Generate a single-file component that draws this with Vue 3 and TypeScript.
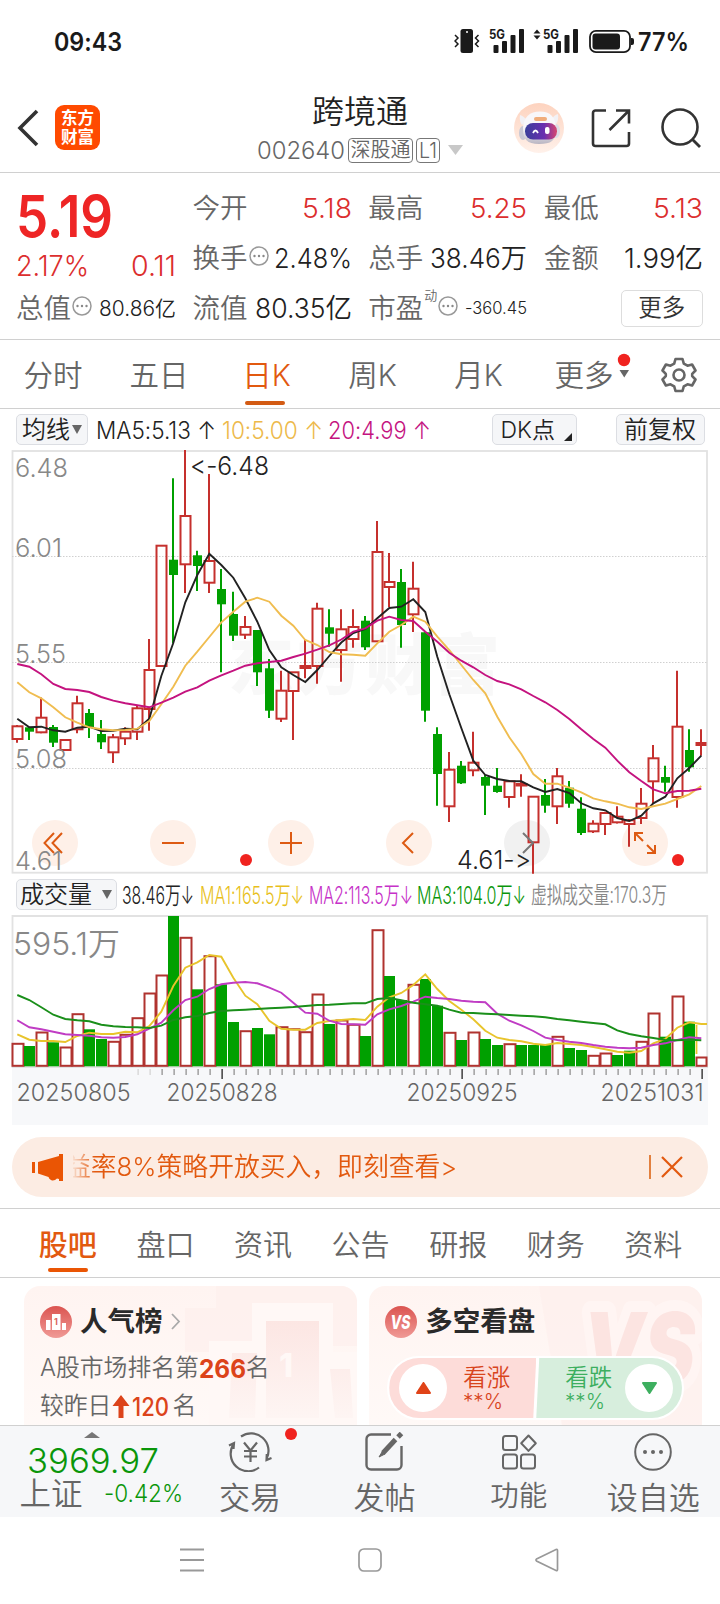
<script setup lang="ts">
import { defineComponent, h } from 'vue'

/* Single-line label whose glyphs are fitted to a fixed width. */
const FitText = defineComponent({
  props: {
    text: { type: String, required: true },
    w: { type: Number, required: true },
    size: { type: Number, required: true },
    weight: { type: Number, default: 350 },
  },
  setup(props) {
    return () =>
      h('svg', { class: 'fit', width: props.w, height: props.size }, [
        h(
          'text',
          {
            x: 0,
            y: props.size * 0.864,
            'font-size': props.size,
            'font-weight': props.weight,
            fill: 'currentColor',
            textLength: props.w,
            lengthAdjust: 'spacingAndGlyphs',
          },
          props.text,
        ),
      ])
  },
})

type Candle = [up: 0 | 1, high: number, top: number, bottom: number, low: number]

const STEP = 12
const cx = (i: number): number => 17 + i * STEP + 0.3

const candles: Candle[] = [
  [1, 725, 726.3, 739, 742.7], [0, 726.7, 727.3, 731.7, 740], [1, 697.5, 717.7, 732.3, 733.3],
  [0, 725, 727, 742.7, 747], [1, 740, 740, 750, 750], [1, 695.7, 703.3, 729.3, 733.3],
  [0, 709, 713, 727.3, 738], [0, 720, 734, 742.3, 749], [1, 734, 737.3, 752.3, 763],
  [1, 727.3, 731.7, 738.3, 745], [1, 705, 708.3, 731.7, 740], [1, 639, 670, 709, 730.7],
  [1, 545.7, 545.7, 666, 666], [0, 478.3, 559.7, 575, 643], [1, 450, 516, 564.3, 593],
  [0, 550.7, 555.3, 566, 591], [1, 474, 561, 582.7, 593], [0, 569, 589, 604.3, 672.3],
  [0, 591.7, 614, 635.7, 641], [1, 616, 627, 634.7, 639], [0, 630, 630, 672.3, 686],
  [0, 659, 668.3, 710.7, 718], [1, 670.7, 690.7, 718.7, 722], [1, 672.3, 672.3, 691, 740],
  [1, 639, 666, 668, 678.3], [1, 602.7, 608.7, 666, 683.7], [0, 609.3, 627.3, 633.7, 646.7],
  [1, 609.3, 629.3, 650, 681.7], [1, 609.3, 627, 639, 647.7], [0, 616, 620.7, 647.3, 650],
  [1, 521, 552, 641.3, 641.3], [1, 553, 582, 587, 607], [0, 569, 582, 625, 647.7],
  [1, 561.7, 588.7, 614.3, 632], [0, 632.3, 632.3, 710.7, 721.7], [0, 727.3, 734, 774, 805.7],
  [1, 752, 769.7, 806.3, 822], [0, 761, 765.7, 783.3, 784], [1, 731.7, 762.7, 770.3, 776.3],
  [0, 775, 777, 785.7, 815], [0, 768, 785.7, 792, 792.7], [1, 780, 781.3, 797, 807.7],
  [1, 774.3, 784, 785.5, 796.7], [1, 796.7, 796.7, 842.3, 873.7], [0, 779, 795, 805.7, 812.7],
  [1, 768, 776.3, 806.3, 824], [0, 781, 787.7, 803.7, 807.7], [0, 797.3, 808.7, 833, 835],
  [1, 820.3, 823.7, 831.3, 833], [1, 811.7, 813, 824, 835], [1, 806.3, 816.7, 822.3, 823.5],
  [1, 819, 820.3, 824, 846.7], [1, 788, 803.7, 818, 824], [1, 745, 758.3, 781.3, 803.3],
  [0, 765.7, 777, 782.7, 791.7], [1, 670.7, 726.7, 797, 807.7], [0, 729.3, 750, 767.3, 771.7],
  [1, 729.3, 743, 745, 755.7],
]

const ma5 = [718.7, 727.3, 726.7, 730.3, 731.7, 727.7, 726.7, 731, 730.7, 728.7, 729.3, 718.7, 676, 643, 602.3, 575, 553.7, 565, 577.7, 598.3, 621.7, 650, 667.3, 675, 682, 670, 656, 642.5, 633, 629, 618.3, 608, 606.7, 599.3, 612, 656.7, 694.3, 728, 760.7, 775, 779, 781, 781.3, 787.3, 792, 789, 793, 803.3, 808.3, 810.3, 818, 821, 815.7, 803.3, 796.7, 778.3, 768, 755.7]
const ma10 = [682.3, 692.3, 698.3, 707.3, 717.3, 722.7, 727.3, 729.3, 730.3, 730, 728.7, 721, 704.3, 686.7, 665.7, 651.7, 637, 622.3, 611.7, 601.7, 597.7, 601.7, 615.7, 625.7, 640, 645, 652, 654.3, 654.7, 655.7, 643.3, 631.7, 625, 616.7, 621.7, 636.7, 650, 665, 680, 693.3, 716.7, 737.3, 754, 774, 783.7, 783.7, 787.7, 792.3, 798.3, 801.3, 803.7, 807.3, 809, 806.3, 803.7, 799, 794.3, 786]
const ma20 = [664, 666.7, 674.3, 684, 689, 690, 692, 697, 700.7, 703.3, 705.3, 707.3, 702.7, 697.7, 691.7, 687.3, 680.7, 675.3, 670.7, 665.7, 663.3, 662, 660.7, 657, 653.7, 649.7, 645.3, 639.5, 631.7, 628.3, 620.7, 616.7, 620, 621, 631.7, 641.7, 652.7, 660.7, 667.3, 675, 681, 684.3, 689.3, 696, 702.3, 710, 719, 729.3, 739, 747.7, 760.7, 772.3, 781, 789.3, 793.3, 791, 790.7, 788.7]

const volTops = [1043.3, 1046, 1032, 1042.3, 1047, 1013.7, 1029.3, 1039, 1041.3, 1034.3, 1017.7, 993, 975, 916, 937.3, 989.3, 955.7, 984.3, 1022, 1030.7, 1028, 1034.3, 1026.7, 1028.7, 1031.7, 994, 1024, 1020, 1024.3, 1036, 929.7, 976, 1000, 984.3, 979, 1005.7, 1032.3, 1040, 1032, 1039, 1045, 1043.7, 1045, 1045, 1044, 1036.3, 1048, 1050, 1055.3, 1053, 1055, 1050.7, 1041.3, 1013, 1036.7, 996, 1021.7, 1057]
/* Days whose volume is drawn as a solid green bar. */
const volGreen = new Set([1, 3, 6, 7, 13, 15, 17, 18, 20, 21, 26, 29, 31, 32, 34, 35, 37, 39, 40, 42, 43, 44, 46, 47, 50, 51, 54, 56])
const v1 = [1034.3, 1039.7, 1041, 1041, 1042, 1036, 1032.7, 1034, 1034, 1031.7, 1032.3, 1026, 1011.7, 986, 967.7, 962.3, 955, 956.7, 977.7, 995.7, 1004.3, 1020.7, 1028.7, 1029.7, 1029.7, 1023, 1021, 1020, 1019, 1020, 1006.7, 997.3, 993, 985, 974.3, 989, 1001, 1009.7, 1019.3, 1030.7, 1037.7, 1040, 1041.3, 1043.7, 1045, 1043, 1044, 1045, 1047, 1049.3, 1051.7, 1052.7, 1051, 1043.3, 1039, 1027.7, 1022.3, 1024]
const v2 = [1020.3, 1027.3, 1029.3, 1031.7, 1034.3, 1035, 1035.7, 1037.3, 1037.7, 1037, 1034.3, 1028.7, 1022.7, 1010.3, 1000, 996.7, 989, 984.3, 982.7, 982, 983.3, 987.7, 992.7, 1002.7, 1012.7, 1013.7, 1020.7, 1024, 1024.3, 1024.7, 1014.3, 1009.3, 1006, 1001.7, 996.7, 998, 999, 1000.7, 1001.7, 1002.3, 1013.7, 1020.7, 1025.3, 1031, 1037.7, 1040, 1041.7, 1043, 1045, 1046.7, 1047.7, 1048.3, 1047.7, 1045, 1043.3, 1040, 1037.3, 1038.3]
const v3 = [995, 1000, 1007.3, 1014.7, 1019, 1020.3, 1021.3, 1024.7, 1026.3, 1027, 1027.3, 1028, 1025.7, 1020, 1017.3, 1016, 1013, 1011, 1010.3, 1009.7, 1009, 1008.3, 1007.7, 1007, 1006, 1005, 1004.7, 1004, 1003.3, 1003.3, 999, 998, 1000.3, 1002.7, 1004.3, 1005.7, 1009.7, 1012.7, 1013, 1013.7, 1014.3, 1015, 1015.7, 1016.3, 1017.3, 1019, 1020.3, 1021.7, 1023, 1024.3, 1030.3, 1034, 1036.3, 1038, 1040, 1040.3, 1039.7, 1040.3]

const line = (ys: number[]): string => ys.map((y, i) => `${cx(i)},${y}`).join(' ')

const ticks = Array.from({ length: 48 }, (_, k) => k + 10)
const majors = new Set([17, 37, 57])

const periods = ['分时', '五日', '日K', '周K', '月K']
const sections = ['股吧', '盘口', '资讯', '公告', '研报', '财务', '资料']
const priceLabels = [
  { t: '6.48', y: 477.3, w: 53 },
  { t: '6.01', y: 557.3, w: 47 },
  { t: '5.55', y: 662.7, w: 51 },
  { t: '5.08', y: 768, w: 52 },
  { t: '4.61', y: 870, w: 47 },
]
</script>

<template>
  <div class="screen">
    <div class="status">
      <FitText text="09:43" :w="68" :size="25" :weight="600" />
      <div class="status-right">
        <svg width="180" height="26" viewBox="454 28 180 26">
          <g fill="#1a1a1a">
            <rect x="460.5" y="29" width="12.5" height="24" rx="2.5" />
            <circle cx="467" cy="32" r="1" fill="#fff" />
            <g fill="none" stroke="#1a1a1a" stroke-width="1.5">
              <path d="M455 35l3 3-3 3 3 3-3 3M478.500 35l-3 3 3 3-3 3 3 3" />
            </g>
            <g v-for="dx in [0, 54]" :key="dx" :transform="`translate(${dx} 0)`">
              <rect x="493.500" y="45" width="5" height="8" rx="1" />
              <rect x="502" y="41" width="5" height="12" rx="1" />
              <rect x="510.500" y="35" width="5" height="18" rx="1" />
              <rect x="519" y="29" width="5" height="24" rx="1" />
              <text x="489" y="39" font-size="13" font-weight="700" textLength="16" lengthAdjust="spacingAndGlyphs">5G</text>
            </g>
            <path d="M533.500 33.500l3.500-4 3.500 4zM533.500 35.500l3.500 4 3.500-4z" />
            <rect x="590" y="30.800" width="40" height="21.400" rx="6" fill="none" stroke="#1a1a1a" stroke-width="1.800" />
            <rect x="592.500" y="33.500" width="27.500" height="16" rx="3" />
            <path d="M631 38h1a2 2 0 0 1 2 2v3a2 2 0 0 1-2 2h-1z" />
          </g>
        </svg>
        <FitText text="77%" :w="51" :size="25" :weight="600" />
      </div>
    </div>

    <header class="header">
      <div class="header-left">
        <svg width="24" height="40" viewBox="0 0 24 40"><path d="M21 3L4 20l17 17" fill="none" stroke="#333" stroke-width="3.600" /></svg>
        <div class="logo"><span>东方</span><span>财富</span></div>
      </div>
      <div class="header-mid">
        <div class="title">跨境通</div>
        <div class="sub">
          <FitText text="002640" :w="88" :size="24" />
          <span class="badge">深股通</span>
          <span class="badge l1"><FitText text="L1" :w="18" :size="21" /></span>
          <svg class="sub-arrow" width="15" height="10"><path d="M0 0h15l-7.500 10z" fill="#c8c8c8" /></svg>
        </div>
      </div>
      <div class="header-right">
        <svg width="50" height="50" viewBox="0 0 50 50">
          <defs>
            <linearGradient id="halo" x1="0" y1="0" x2="0" y2="1"><stop offset="0" stop-color="#fdd3bf" /><stop offset="1" stop-color="#fff1ea" /></linearGradient>
            <linearGradient id="visor"><stop offset="0" stop-color="#3a3f9a" /><stop offset=".6" stop-color="#6a2fb0" /><stop offset="1" stop-color="#d8476e" /></linearGradient>
            <linearGradient id="helmet" x1="0" y1="0" x2="0" y2="1"><stop offset=".5" stop-color="#f8f7fa" /><stop offset="1" stop-color="#b9b5c2" /></linearGradient>
          </defs>
          <circle cx="25" cy="25" r="25" fill="url(#halo)" />
          <path d="M6 12q4 1 7 6l-5 4q-3-4-2-10zM44 11q-4 1-7 6l5 4q3-4 2-10z" fill="#f2f1f5" />
          <ellipse cx="9" cy="30" rx="4" ry="7" fill="#c9c8d4" />
          <ellipse cx="42" cy="28" rx="4" ry="7" fill="#dddce5" />
          <path d="M9 26C9 14 16 8.500 26 8.500s16 5.500 16 17.500-5 15-17 15S9 36 9 26z" fill="url(#helmet)" />
          <rect x="20" y="14" width="13" height="4" rx="2" fill="#f0ad7c" />
          <rect x="11" y="20" width="32" height="16.500" rx="8" fill="url(#visor)" />
          <path d="M19 30q2.500-5 5 0" fill="none" stroke="#fff" stroke-width="1.800" />
          <rect x="31" y="24" width="4.500" height="7" rx="2" fill="#fff" />
        </svg>
        <svg width="40" height="40" viewBox="0 0 40 40"><path d="M15 2.500H4.500a2.500 2.500 0 0 0-2.500 2.500v30.500a2.500 2.500 0 0 0 2.500 2.500H35.500a2.500 2.500 0 0 0 2.500-2.500V24M25 2.500H38V15.500M38 2.500L18.500 22" fill="none" stroke="#333" stroke-width="2.600" /></svg>
        <svg width="42" height="42" viewBox="0 0 42 42"><circle cx="19" cy="20" r="17.500" fill="none" stroke="#333" stroke-width="2.600" /><path d="M31 32l8 8" stroke="#333" stroke-width="2.800" /></svg>
      </div>
    </header>

    <section class="quote">
      <div class="q-price">
        <div class="q-big"><FitText text="5.19" :w="97" :size="58" :weight="600" /></div>
        <div class="q-change">
          <FitText text="2.17%" :w="73" :size="28" />
          <FitText text="0.11" :w="45" :size="28" />
        </div>
      </div>
      <div class="cell"><span>今开</span><FitText class="red" text="5.18" :w="50" :size="27.500" /></div>
      <div class="cell"><span>最高</span><FitText class="red" text="5.25" :w="57" :size="27.500" /></div>
      <div class="cell"><span>最低</span><FitText class="red" text="5.13" :w="50" :size="27.500" /></div>
      <div class="cell">
        <span>换手</span>
        <svg class="more-i" width="20" height="20"><circle cx="10" cy="10" r="9" fill="none" stroke="#999" stroke-width="1.500" /><g fill="#888"><circle cx="5.500" cy="10" r="1.200" /><circle cx="10" cy="10" r="1.200" /><circle cx="14.500" cy="10" r="1.200" /></g></svg>
        <FitText class="dark" text="2.48%" :w="78" :size="27.500" />
      </div>
      <div class="cell"><span>总手</span><FitText class="dark" text="38.46万" :w="97" :size="27.500" /></div>
      <div class="cell"><span>金额</span><FitText class="dark" text="1.99亿" :w="79" :size="27.500" /></div>
      <div class="cell">
        <span>总值</span>
        <svg class="more-i" width="20" height="20"><circle cx="10" cy="10" r="9" fill="none" stroke="#999" stroke-width="1.500" /><g fill="#888"><circle cx="5.500" cy="10" r="1.200" /><circle cx="10" cy="10" r="1.200" /><circle cx="14.500" cy="10" r="1.200" /></g></svg>
        <FitText class="dark" text="80.86亿" :w="77" :size="21" />
      </div>
      <div class="cell"><span>流值</span><FitText class="dark" text="80.35亿" :w="97" :size="27.500" /></div>
      <div class="cell">
        <span>市盈</span><sup>动</sup>
        <svg class="more-i" width="20" height="20"><circle cx="10" cy="10" r="9" fill="none" stroke="#999" stroke-width="1.500" /><g fill="#888"><circle cx="5.500" cy="10" r="1.200" /><circle cx="10" cy="10" r="1.200" /><circle cx="14.500" cy="10" r="1.200" /></g></svg>
        <FitText class="dark" text="-360.45" :w="62" :size="17.500" />
      </div>
      <div class="cell end"><button class="more-btn">更多</button></div>
    </section>

    <nav class="periods">
      <div v-for="(p, i) in periods" :key="p" class="period" :class="{ on: i === 2, k: i > 1 }">{{ p }}</div>
      <div class="period more">
        更多
        <svg class="more-flag" width="14" height="30"><circle cx="7" cy="7" r="6.200" fill="#f0231f" /><path d="M2.500 17h9.500l-4.750 7.500z" fill="#666" /></svg>
      </div>
      <div class="period">
        <svg width="36" height="36" viewBox="0 0 36 36" fill="none" stroke="#666" stroke-width="2.600" stroke-linejoin="round">
          <path d="M14.500 2h7l1.300 4.600 3.700 2.100 4.600-1.200 3.400 6-3.300 3.400v2.200l3.300 3.400-3.400 6-4.600-1.200-3.700 2.100L21.500 34h-7l-1.300-4.600-3.700-2.100-4.600 1.200-3.400-6 3.300-3.400v-2.200L1.500 13.500l3.400-6 4.600 1.200 3.700-2.100z" />
          <circle cx="18" cy="18" r="5.500" />
        </svg>
      </div>
    </nav>

    <div class="ma-bar">
      <button class="chip c1"><span>均线</span><svg width="10" height="9"><path d="M0 0h10l-5 9z" fill="#666" /></svg></button>
      <FitText class="m1" text="MA5:5.13 ↑" :w="120" :size="24" />
      <FitText class="m2" text="10:5.00 ↑" :w="101" :size="24" />
      <FitText class="m3" text="20:4.99 ↑" :w="103" :size="24" />
      <button class="chip c2"><span>DK点</span><svg width="8" height="8"><path d="M8 0v8H0z" fill="#222" /></svg></button>
      <button class="chip c3">前复权</button>
    </div>

    <svg class="chart" width="720" height="424" viewBox="0 450 720 424">
      <g fill="none" stroke="#e2e2e2" stroke-width="1.800">
        <rect x="12.500" y="451" width="694.500" height="421.700" />
      </g>
      <text x="228" y="689" font-size="66" font-weight="900" fill="#f8f8f8" textLength="272">东方财富</text>
      <g stroke="#d0d0d0" stroke-width="1" stroke-dasharray="1.500 1.500">
        <path d="M12 556.500H708M12 662.500H708M12 768.500H708" />
      </g>
      <g fill="#fef0e8">
        <circle v-for="x in [55, 173, 291, 409, 645]" :key="x" :cx="x" cy="843" r="23" />
        <circle cx="527" cy="843" r="23" fill="#f1f1f1" />
      </g>
      <g fill="#f0231f"><circle cx="246" cy="860" r="6" /><circle cx="678" cy="860" r="6" /></g>
      <g v-for="(c, i) in candles" :key="i">
        <template v-if="c[0]">
          <path :d="`M${cx(i) - 0.3} ${c[1]}V${c[2]}M${cx(i) - 0.3} ${c[3]}V${c[4]}`" stroke="#c5302d" stroke-width="2" />
          <rect :x="cx(i) - 4.800" :y="c[2]" :width="i === 57 ? 9 : 10" :height="c[3] - c[2]" fill="none" stroke="#c5302d" stroke-width="2" />
        </template>
        <template v-else>
          <path :d="`M${cx(i) - 0.3} ${c[1]}V${c[4]}`" stroke="#00a000" stroke-width="2" />
          <rect :x="cx(i) - 4.300" :y="c[2]" width="9" :height="c[3] - c[2]" fill="#00a000" />
        </template>
      </g>
      <g fill="none" stroke="#dd5a12" stroke-width="2">
        <path d="M54 833L44.500 843l9.500 10M62 833L52.500 843l9.500 10" />
        <path d="M162 843H184M280 843h22M291 832v22" />
        <path d="M413 833l-10 10 10 10" />
        <path d="M635 841v-8h8M635 833l8 8M647 845l8 8M655 845v8h-8" />
      </g>
      <path d="M523 833l10 10-10 10" fill="none" stroke="#777" stroke-width="2" />
      <g font-size="26" fill="#888">
        <text v-for="l in priceLabels" :key="l.t" x="15" :y="l.y" :textLength="l.w" lengthAdjust="spacingAndGlyphs">{{ l.t }}</text>
      </g>
      <g fill="none" stroke-width="1.900">
        <polyline :points="line(ma5)" stroke="#222" />
        <polyline :points="line(ma10)" stroke="#f0bd50" />
        <polyline :points="line(ma20)" stroke="#c4137f" />
      </g>
      <g font-size="26" fill="#222">
        <text x="190" y="475" textLength="79" lengthAdjust="spacingAndGlyphs">&lt;-6.48</text>
        <text x="457" y="869" textLength="74" lengthAdjust="spacingAndGlyphs">4.61-&gt;</text>
      </g>
    </svg>

    <div class="vol-bar">
      <button class="chip c4"><span>成交量</span><svg width="10" height="9"><path d="M0 0h10l-5 9z" fill="#666" /></svg></button>
      <FitText class="m1" text="38.46万↓" :w="72" :size="24" />
      <FitText class="y" text="MA1:165.5万↓" :w="104" :size="24" />
      <FitText class="p" text="MA2:113.5万↓" :w="104" :size="24" />
      <FitText class="g" text="MA3:104.0万↓" :w="109" :size="24" />
      <FitText class="gr" text="虚拟成交量:170.3万" :w="136" :size="23" />
    </div>

    <svg class="chart" width="720" height="210" viewBox="0 915 720 210">
      <rect x="12" y="1068" width="696" height="57" fill="#f7f8fa" />
      <path d="M12.500 1067V916H707.200V1067z" fill="none" stroke="#e2e2e2" stroke-width="1.800" />
      <text x="13" y="955" font-size="31" fill="#888" textLength="107" lengthAdjust="spacingAndGlyphs">595.1万</text>
      <g v-for="(t, i) in volTops" :key="i">
        <rect v-if="volGreen.has(i)" :x="cx(i) - 5.300" :y="t" width="11" :height="1066.300 - t" fill="#00a000" />
        <rect v-else :x="cx(i) - 4.800" :y="t + 0.5" :width="i === 57 ? 10 : 11" :height="1065.300 - t" fill="#fff" stroke="#b0332f" stroke-width="2" />
      </g>
      <path d="M696.500 1025V1056" stroke="#e8c42c" stroke-width="1.800" stroke-dasharray="13 3" />
      <g fill="none" stroke-width="1.900">
        <polyline :points="line(v1) + ' 707,1024'" stroke="#e8c42c" />
        <polyline :points="line(v2)" stroke="#c03cc4" />
        <polyline :points="line(v3)" stroke="#1a8f1a" />
      </g>
      <rect
        v-for="t in ticks"
        :key="t"
        :x="17.300 + t * 12"
        y="1069"
        width="1.700"
        :height="majors.has(t) ? 10 : 6"
        :fill="majors.has(t) ? '#555' : t < 12 ? '#ddd' : '#aaa'"
      />
      <g font-size="24.500" fill="#666">
        <text x="16.500" y="1101" textLength="114" lengthAdjust="spacingAndGlyphs">20250805</text>
        <text x="166.500" y="1101" textLength="111" lengthAdjust="spacingAndGlyphs">20250828</text>
        <text x="406.500" y="1101" textLength="111" lengthAdjust="spacingAndGlyphs">20250925</text>
        <text x="600.500" y="1101" textLength="103" lengthAdjust="spacingAndGlyphs">20251031</text>
      </g>
    </svg>

    <div class="notice">
      <svg width="31" height="27" viewBox="0 0 31 27" fill="#ea5504"><rect x="0" y="8" width="3" height="11" /><path d="M6 8L27 2V0h4v27h-4v-2l-2-.5q-3 3-6 1.500-2-1-2.500-3L6 19.500z" /></svg>
      <div class="notice-text">益率8%策略开放买入，即刻查看&gt;</div>
      <i class="sep"></i>
      <svg width="22" height="22"><path d="M1 1l20 20M21 1L1 21" stroke="#e2590f" stroke-width="2.200" /></svg>
    </div>

    <nav class="sections">
      <div v-for="(s, i) in sections" :key="s" class="section" :class="{ on: i === 0 }">{{ s }}</div>
    </nav>

    <div class="cards">
      <div class="card">
        <svg class="deco" width="200" height="140" viewBox="0 0 200 140">
          <defs><linearGradient id="bar" x1="0" y1="0" x2="0" y2="1"><stop offset="0" stop-color="#fce6e3" /><stop offset="1" stop-color="#fef5f3" /></linearGradient></defs>
          <path d="M59 0H200V60H59V66H28V22H59z" fill="#fdefec" opacity=".7" />
          <path d="M52 55H95V17H176V66H200V140H52z" fill="#fff8f6" />
          <path d="M109 35H162V132H109zM75 67H100L98 132H72zM173 83H193L196 132H178z" fill="url(#bar)" />
          <text x="122" y="91" font-size="32" font-weight="800" fill="#fff8f6">1</text>
        </svg>
        <div class="card-head">
          <svg width="32" height="32" viewBox="0 0 32 32"><circle cx="16" cy="16" r="16" fill="url(#ic)" /><defs><linearGradient id="ic" x1="0" y1="0" x2="0" y2="1"><stop offset="0" stop-color="#db5450" /><stop offset="1" stop-color="#f09a96" /></linearGradient></defs><path d="M6 14h4.500v10H6zM12 8h8.500v16H12zM22 17h4v7h-4z" fill="#fff" /><text x="14" y="18.500" font-size="9" font-weight="700" fill="#db6460">1</text></svg>
          <b>人气榜</b>
          <svg width="10" height="17"><path d="M1 1l7 7.500-7 7.500" fill="none" stroke="#aaa" stroke-width="1.800" /></svg>
        </div>
        <div class="card-row r1">A股市场排名第<FitText class="hot" text="266" :w="47" :size="25" :weight="700" />名</div>
        <div class="card-row r2">较昨日<svg width="18" height="23"><path d="M9 0l8.500 11H11.500v12h-5V11H.5z" fill="#dc431a" /></svg><FitText class="hot" text="120" :w="37" :size="25" :weight="500" /><span class="gap">名</span></div>
      </div>
      <div class="card right">
        <svg class="deco" width="165" height="140" viewBox="0 0 165 140">
          <path d="M2 0H165V140H25z" fill="#fdefec" opacity=".7" />
          <text x="46" y="97" font-size="98" font-weight="900" font-style="italic" fill="#fce4e1" stroke="#fff5f3" stroke-width="22" stroke-linejoin="round" paint-order="stroke" textLength="112" lengthAdjust="spacingAndGlyphs">VS</text>
        </svg>
        <div class="card-head">
          <svg width="32" height="32" viewBox="0 0 32 32"><circle cx="16" cy="16" r="16" fill="url(#ic)" /><text x="5.500" y="23" font-size="19" font-weight="800" font-style="italic" fill="#fff" textLength="20" lengthAdjust="spacingAndGlyphs">VS</text></svg>
          <b>多空看盘</b>
        </div>
        <div class="vote">
          <div class="side bull">
            <i><svg width="15" height="12"><path d="M7.500 1L14 11H1z" fill="#e04318" stroke="#e04318" stroke-width="2" stroke-linejoin="round" /></svg></i>
            <div><span>看涨</span><FitText text="**%" :w="40" :size="21" /></div>
          </div>
          <div class="side bear">
            <div><span>看跌</span><FitText text="**%" :w="40" :size="21" /></div>
            <i><svg width="15" height="12"><path d="M7.500 11L14 1H1z" fill="#3daf5f" stroke="#3daf5f" stroke-width="2" stroke-linejoin="round" /></svg></i>
          </div>
        </div>
      </div>
    </div>

    <footer class="dock">
      <div class="index">
        <svg class="caret" width="16" height="6"><path d="M0 6l8-6 8 6z" fill="#777" /></svg>
        <FitText text="3969.97" :w="132" :size="34.500" />
        <div class="index-row"><span>上证</span><FitText text="-0.42%" :w="79" :size="24.500" /></div>
      </div>
      <div class="dock-item">
        <svg width="46" height="40" viewBox="0 0 46 40" fill="none" stroke="#666" stroke-width="2.200">
          <path d="M14 4.500A17.500 17.500 0 0 1 39.500 27M32 35.500A17.500 17.500 0 0 1 7 11.500M2 13.500l5-2.500-.5 6M44.500 26l-5 2 .3-6" />
          <path d="M17 10.500l6.500 8 6.500-8M23.500 18.500V30M17 19h13M17 24.500h13" />
        </svg>
        <span>交易</span><i class="dot"></i>
      </div>
      <div class="dock-item">
        <svg width="40" height="40" viewBox="0 0 40 40" fill="none" stroke="#666" stroke-width="2.400"><path d="M27 2.500H7A4.500 4.500 0 0 0 2.500 7v26A4.500 4.500 0 0 0 7 37.500H33A4.500 4.500 0 0 0 37.500 33V14" /><path d="M31.500 7.500L19 21" stroke-width="5" /><path d="M34 5l3.500-3.500" stroke-width="5" /><path d="M18 20l-3 5 6-3z" fill="#666" stroke-width="1" /></svg>
        <span>发帖</span>
      </div>
      <div class="dock-item fn">
        <svg width="38" height="40" viewBox="0 0 38 40" fill="none" stroke="#666" stroke-width="2"><rect x="3" y="4" width="14" height="14" rx="2.500" /><rect x="3" y="22.500" width="14" height="14" rx="2.500" /><rect x="21" y="22.500" width="14" height="14" rx="2.500" /><path d="M28.500 3.500l7.300 7.700-7.300 7.700-7.300-7.700z" stroke-linejoin="round" /></svg>
        <span>功能</span>
      </div>
      <div class="dock-item">
        <svg width="40" height="40" viewBox="0 0 40 40"><circle cx="20" cy="20" r="17.800" fill="none" stroke="#666" stroke-width="2" /><g fill="#666"><circle cx="12" cy="20" r="2" /><circle cx="20" cy="20" r="2" /><circle cx="28" cy="20" r="2" /></g></svg>
        <span>设自选</span>
      </div>
    </footer>

    <div class="sysnav">
      <svg width="24" height="24"><path d="M0 1.500h24M0 12h24M0 22.500h24" stroke="#999" stroke-width="1.800" /></svg>
      <svg width="24" height="24"><rect x="1" y="1" width="22" height="22" rx="5" fill="none" stroke="#999" stroke-width="1.700" /></svg>
      <svg width="24" height="24"><path d="M1.500 11L21 1.500q1.500-.5 1.500 1v19q0 1.500-1.500 1L1.500 13q-1-1 0-2z" fill="none" stroke="#999" stroke-width="1.700" /></svg>
    </div>
  </div>
</template>

<style>
body {
  background: #fff;
}
.fit {
  display: block;
  overflow: visible;
  flex: none;
}
</style>

<style scoped>
.screen {
  width: 720px;
  height: 1604px;
  overflow: hidden;
  background: #fff;
  font-family: Inter, 'Noto Sans CJK SC', sans-serif;
  font-weight: 350;
  font-feature-settings: 'calt' 0;
  color: #666;
  box-sizing: border-box;
}
.screen * {
  box-sizing: border-box;
}
svg {
  display: block;
  flex: none;
}
button {
  font-family: inherit;
  font-weight: inherit;
  padding: 0;
  margin: 0;
}
.status {
  height: 82px;
  padding: 0 31px 0 54px;
  display: flex;
  align-items: center;
  justify-content: space-between;
  color: #1a1a1a;
}
.status-right {
  display: flex;
  align-items: center;
  gap: 4px;
}
.header {
  height: 91px;
  border-bottom: 1px solid #d0d0d0;
  display: grid;
  grid-template-columns: 240px 240px 240px;
}
.header-left {
  display: flex;
  align-items: center;
  gap: 15px;
  padding: 1px 0 0 16px;
}
.logo {
  width: 45px;
  height: 45px;
  border-radius: 9px;
  background: #ff4a00;
  color: #fff;
  font-size: 16.5px;
  font-weight: 700;
  line-height: 19px;
  display: flex;
  flex-direction: column;
  align-items: center;
  justify-content: center;
}
.header-mid {
  display: flex;
  flex-direction: column;
  align-items: center;
  padding-top: 10px;
}
.title {
  font-size: 32px;
  line-height: 40px;
  color: #222;
}
.sub {
  display: flex;
  align-items: center;
  height: 36px;
  white-space: nowrap;
}
.badge {
  height: 25px;
  width: 65px;
  margin-left: 3px;
  border: 1.5px solid #777;
  border-radius: 4px;
  font-size: 20px;
  line-height: 22px;
  text-align: center;
}
.badge.l1 {
  width: 24px;
  display: flex;
  align-items: center;
  justify-content: center;
}
.sub-arrow {
  margin-left: 8px;
}
.header-right {
  display: flex;
  align-items: center;
  padding: 1px 0 0 34px;
}
.header-right svg:nth-child(2) {
  margin-left: 27px;
}
.header-right svg:nth-child(3) {
  margin-left: 30px;
}
.quote {
  height: 167px;
  border-bottom: 1px solid #d0d0d0;
  padding: 10px 17px 0 16px;
  display: grid;
  grid-template-columns: 160px 159px 159px 159px;
  column-gap: 16.6px;
  grid-template-rows: 50px 50px 50px;
}
.q-price {
  grid-row: span 2;
  color: #ee2525;
}
.q-big {
  height: 65px;
  display: flex;
  align-items: center;
}
.q-change {
  display: flex;
  justify-content: space-between;
  align-items: center;
  height: 35px;
  color: #dc2e2e;
}
.cell {
  display: flex;
  align-items: center;
  font-size: 27.5px;
  line-height: 50px;
  position: relative;
}
.cell > :last-child {
  margin-left: auto;
}
.cell.end {
  grid-column: 4;
}
.more-i {
  margin-left: 1px;
  margin-top: -4px;
}
sup {
  font-size: 13px;
  line-height: 16px;
  margin: -26px 0 0 1px;
}
.red {
  color: #dc2e2e;
}
.dark {
  color: #222;
}
.more-btn {
  width: 82px;
  height: 37px;
  border: 1.5px solid #ddd;
  border-radius: 5px;
  background: #fff;
  color: #333;
  font-size: 23.5px;
  line-height: 34px;
}
.periods {
  height: 69px;
  border-bottom: 1px solid #d0d0d0;
  display: grid;
  grid-template-columns: repeat(6, 106px) 86px;
}
.period {
  display: flex;
  align-items: center;
  justify-content: center;
  font-size: 29.5px;
  line-height: 70px;
  position: relative;
}
.period.k {
  padding-left: 3px;
}
.period.more {
  padding-left: 2px;
}
.period.on,
.section.on {
  color: #e2590f;
}
.period.on::after {
  content: '';
  position: absolute;
  left: 33px;
  width: 40px;
  bottom: 5px;
  height: 4px;
  border-radius: 2px;
  background: #d35b14;
}
.more-flag {
  position: absolute;
  left: 87px;
  top: 13px;
}
.ma-bar {
  height: 41px;
  display: flex;
  align-items: center;
  padding-left: 16px;
}
.chip {
  height: 31px;
  border: 1.5px solid #dcdee3;
  border-radius: 5px;
  background: #f5f6f8;
  color: #222;
  font-size: 24px;
  line-height: 28px;
  display: flex;
  align-items: center;
  flex: none;
  white-space: nowrap;
}
.c1 {
  width: 72px;
  padding-left: 5px;
  gap: 2px;
  margin-right: 7.5px;
}
.c2 {
  width: 85px;
  padding-left: 8px;
  gap: 6px;
  margin-left: 61px;
}
.c2 svg {
  align-self: flex-end;
  margin: 0 4px 3px auto;
}
.c2 span {
  font-size: 23px;
}
.c3 {
  width: 89px;
  justify-content: center;
  margin-left: 39px;
}
.m1 {
  color: #222;
}
.m2 {
  color: #edb94a;
  margin-left: 6px;
}
.m3 {
  color: #c4137f;
  margin-left: 5px;
}
.vol-bar {
  height: 41px;
  display: flex;
  align-items: center;
  padding-left: 16px;
}
.c4 {
  width: 101px;
  padding-left: 3px;
  gap: 10px;
  margin-right: 5px;
}
.vol-bar .y {
  color: #e8bf1c;
  margin-left: 6px;
}
.vol-bar .p {
  color: #c632c8;
  margin-left: 5px;
}
.vol-bar .g {
  color: #0a960a;
  margin-left: 4px;
}
.vol-bar .gr {
  color: #888;
  margin-left: 5px;
}
.notice {
  margin: 12px 12px 0;
  height: 60px;
  border-radius: 30px;
  background: #fcece3;
  display: flex;
  align-items: center;
  padding-left: 20px;
  color: #e2590f;
}
.notice-text {
  margin-left: 10px;
  width: 560px;
  font-size: 25.8px;
  line-height: 60px;
  white-space: nowrap;
  text-indent: -8px;
  overflow: hidden;
  -webkit-mask-image: linear-gradient(90deg, rgba(0, 0, 0, 0.1), #000 22px);
  mask-image: linear-gradient(90deg, rgba(0, 0, 0, 0.1), #000 22px);
}
.sep {
  width: 1.5px;
  height: 24px;
  background: #e2803f;
  margin: 0 10px 0 16px;
}
.sections {
  margin-top: 11px;
  height: 70px;
  border-top: 1px solid #d0d0d0;
  border-bottom: 1px solid #d0d0d0;
  padding-left: 19px;
  display: grid;
  grid-template-columns: repeat(7, 97.6px);
}
.section {
  height: 68px;
  font-size: 29px;
  line-height: 73px;
  text-align: center;
  position: relative;
}
.section.on {
  font-weight: 500;
}
.section.on::after {
  content: '';
  position: absolute;
  left: 29px;
  width: 40px;
  bottom: 5px;
  height: 4px;
  border-radius: 2px;
  background: #ea5504;
}
.cards {
  height: 147px;
  padding: 8px 18px 0 24px;
  display: flex;
  gap: 12.5px;
  overflow: hidden;
}
.card {
  width: 333px;
  height: 160px;
  border-radius: 16px;
  background: linear-gradient(#fff4f1, #fffaf8);
  padding: 16px 16px 0;
  position: relative;
  overflow: hidden;
}
.deco {
  position: absolute;
  right: 0;
  top: 0;
}
.card-head {
  position: relative;
  height: 39px;
  display: flex;
  align-items: center;
  gap: 8px;
  color: #2a2a2a;
}
.card-head b {
  font-size: 27.5px;
  line-height: 39px;
}
.card-row {
  position: relative;
  display: flex;
  align-items: center;
  font-size: 23.8px;
  height: 38px;
  line-height: 38px;
  white-space: nowrap;
}
.r1 {
  margin-top: 8px;
}
.r2 svg {
  margin: 0 2px 0 1px;
}
.r2 .fit {
  margin: 0;
}
.hot {
  color: #dc431a;
}
.gap {
  margin-left: 3px;
}
.vote {
  position: relative;
  margin: 15px 0 0 2px;
  width: 297px;
  height: 64px;
  border: 2px solid #fff;
  border-radius: 32px;
  display: flex;
  background: #fff;
  overflow: hidden;
}
.side {
  height: 60px;
  width: 147px;
  display: flex;
  align-items: center;
}
.side i {
  width: 48px;
  height: 48px;
  border-radius: 50%;
  background: #fff;
  display: flex;
  align-items: center;
  justify-content: center;
}
.side span {
  display: block;
  font-size: 23.5px;
  line-height: 27px;
}
.bull {
  background: #fddcd9;
  color: #d8441c;
  padding-left: 10px;
  gap: 16px;
  clip-path: polygon(0 0, 100% 0, calc(100% - 3px) 100%, 0 100%);
}
.bear {
  margin-left: -1px;
  background: #d7eedd;
  color: #3daf5f;
  padding-left: 30px;
  gap: 13px;
  clip-path: polygon(4px 0, 100% 0, 100% 100%, 1px 100%);
}
.dock {
  height: 92px;
  border-top: 1px solid #d0d0d0;
  background: #f6f7f9;
  display: grid;
  grid-template-columns: 182.9px repeat(4, 134.4px);
  position: relative;
}
.index {
  color: #0a960a;
  padding: 17px 0 0 26.5px;
  position: relative;
}
.caret {
  position: absolute;
  left: 84px;
  top: 6px;
}
.index-row {
  display: flex;
  align-items: center;
  margin: -1px 0 0 -7px;
}
.index-row span {
  font-size: 31.5px;
  line-height: 34px;
  color: #666;
  width: 84px;
}
.dock-item {
  display: flex;
  flex-direction: column;
  align-items: center;
  padding-top: 6px;
  position: relative;
}
.dock-item span {
  font-size: 31px;
  line-height: 36px;
  margin-top: 8px;
}
.fn span {
  font-size: 28.5px;
  margin-top: 6px;
}
.dot {
  position: absolute;
  left: 102px;
  top: 2px;
  width: 12px;
  height: 12px;
  border-radius: 50%;
  background: #f0231f;
}
.sysnav {
  height: 86px;
  display: flex;
  align-items: center;
  padding-left: 180px;
  gap: 153.5px;
}
</style>
